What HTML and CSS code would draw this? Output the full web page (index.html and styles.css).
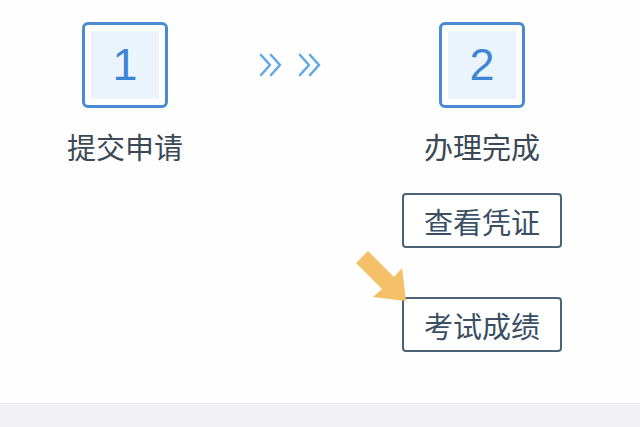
FILE: index.html
```html
<!DOCTYPE html>
<html lang="zh-CN">
<head>
    <meta charset="UTF-8">
    <meta name="viewport" content="width=device-width, initial-scale=1.0">
    <title>办理进度</title>
    <link rel="stylesheet" href="styles.css">
</head>
<body>

    <div class="page">
        <div class="steps">
            <div class="step">
                <div class="step-num"><span>1</span></div>
                <div class="step-name">提交申请</div>
            </div>

            <div class="next">
                <svg width="66" height="26" viewBox="0 0 66 26">
                    <g fill="none" stroke="#63a9e8" stroke-width="2.6" stroke-linecap="round" stroke-linejoin="round">
                        <polyline points="2,3 11,13 2,23" />
                        <polyline points="12,3 21,13 12,23" />
                        <polyline points="41,3 50,13 41,23" />
                        <polyline points="51,3 60,13 51,23" />
                    </g>
                </svg>
            </div>

            <div class="step">
                <div class="step-num"><span>2</span></div>
                <div class="step-name">办理完成</div>
                <button class="action">查看凭证</button>
                <button class="action marked">
                    考试成绩
                    <!-- pointer over the button -->
                    <svg class="pointer" width="54" height="54" viewBox="0 0 54 54">
                        <polygon fill="#f4c168" points="1,13 13,1 39,27 47,18 51,51 18,47 27,39" />
                    </svg>
                </button>
            </div>
        </div>
    </div>

    <div class="footer"></div>

</body>
</html>
```

FILE: styles.css
```css
body {
    margin: 0;
    background-color: #fefefe;
    font-family: "Noto Sans CJK SC", "Noto Sans", sans-serif;
}

.page {
    height: 403px;
}

.steps {
    display: flex;
    padding-top: 22px;
    padding-left: 45px;
}

.step {
    width: 160px;
    display: flex;
    flex-direction: column;
    align-items: center;
}

.step-num {
    box-sizing: border-box;
    width: 86px;
    height: 86px;
    border: 3px solid #4a8ad2;
    border-radius: 6px;
    padding: 6px;
    display: flex;
}

.step-num span {
    flex: 1;
    background-color: #ebf4fd;
    color: #3d86d4;
    font-family: "Liberation Sans", Arial, sans-serif;
    font-size: 45px;
    display: flex;
    align-items: center;
    justify-content: center;
}

.step-name {
    margin-top: 18px;
    font-size: 29px;
    line-height: 40px;
    color: #3b4856;
}

.next {
    width: 197px;
    padding-left: 54px;
    padding-top: 30px;
    box-sizing: border-box;
}

.action {
    position: relative;
    margin-top: 27px;
    width: 160px;
    height: 55px;
    background-color: #fff;
    border: 2px solid #4a6377;
    border-radius: 4px;
    font-family: "Noto Sans CJK SC", "Noto Sans", sans-serif;
    font-size: 29px;
    color: #3a4f64;
    padding: 0;
}

.action.marked {
    margin-top: 49px;
}

.pointer {
    position: absolute;
    left: -49px;
    top: -49px;
}

.footer {
    height: 24px;
    background-color: #f2f2f6;
    border-top: 1px solid #ececf0;
}
```
